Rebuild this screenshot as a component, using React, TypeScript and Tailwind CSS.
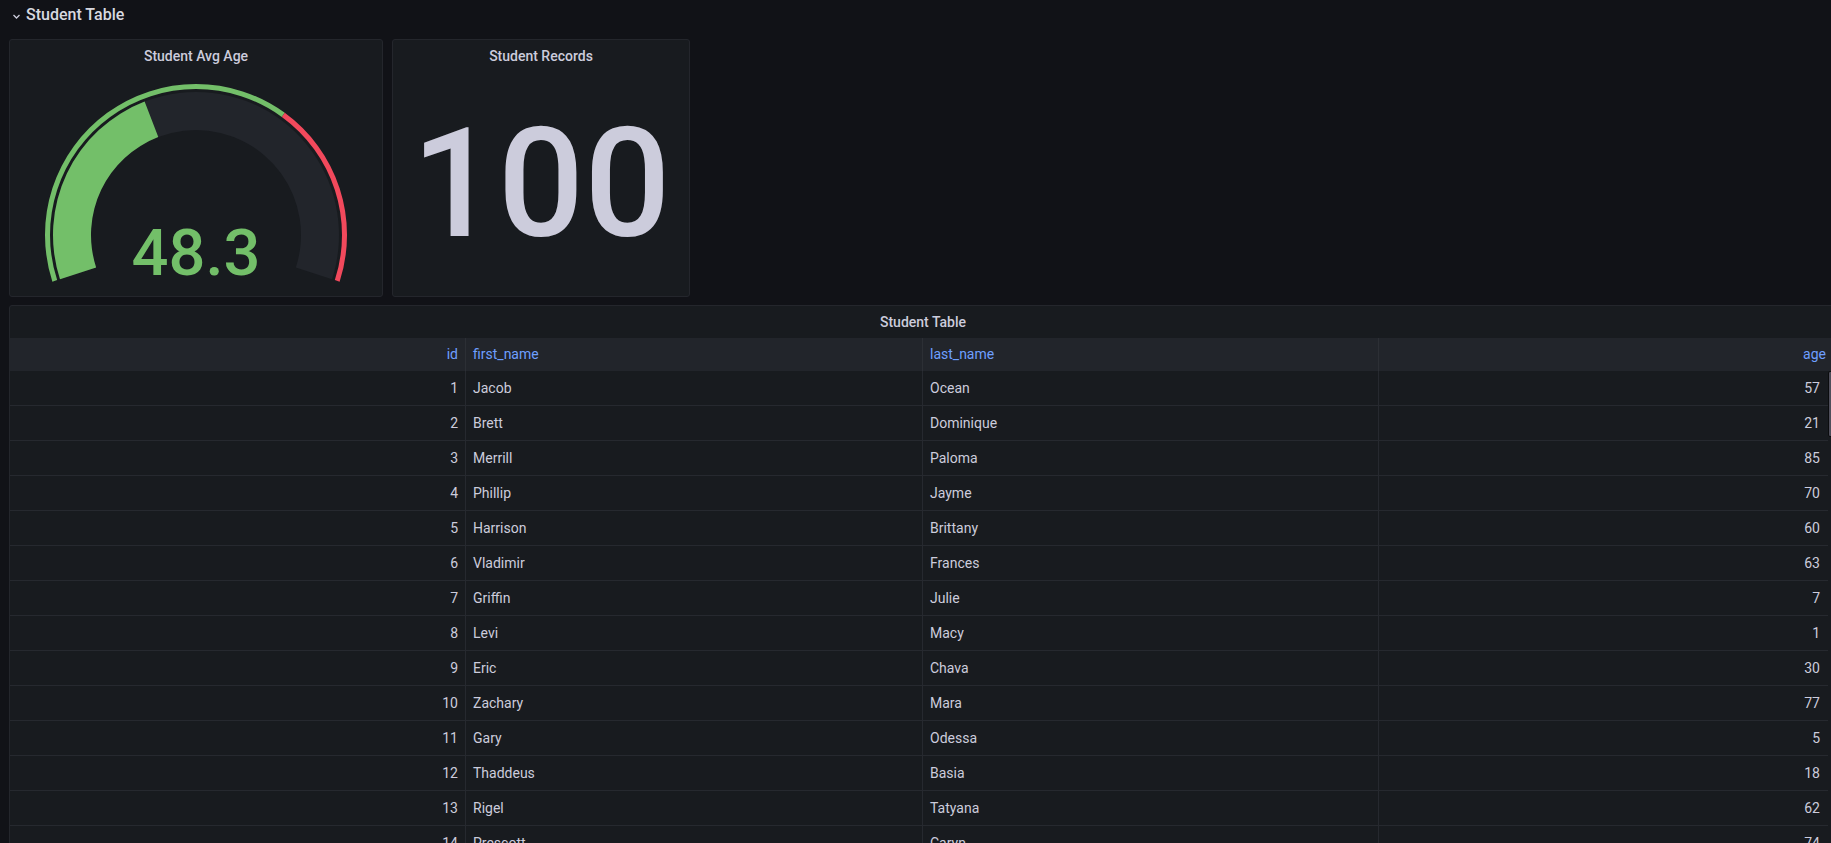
import React from "react";

const rows: [number, string, string, number][] = [
  [1, "Jacob", "Ocean", 57],
  [2, "Brett", "Dominique", 21],
  [3, "Merrill", "Paloma", 85],
  [4, "Phillip", "Jayme", 70],
  [5, "Harrison", "Brittany", 60],
  [6, "Vladimir", "Frances", 63],
  [7, "Griffin", "Julie", 7],
  [8, "Levi", "Macy", 1],
  [9, "Eric", "Chava", 30],
  [10, "Zachary", "Mara", 77],
  [11, "Gary", "Odessa", 5],
  [12, "Thaddeus", "Basia", 18],
  [13, "Rigel", "Tatyana", 62],
  [14, "Prescott", "Caryn", 74],
];

// annular sector, angles in degrees (math orientation), drawn clockwise from a0 to a1
function sector(cx: number, cy: number, r0: number, r1: number, a0: number, a1: number) {
  const rad = (a: number) => (a * Math.PI) / 180;
  const pt = (r: number, a: number) =>
    `${(cx + r * Math.cos(rad(a))).toFixed(2)} ${(cy - r * Math.sin(rad(a))).toFixed(2)}`;
  const large = a0 - a1 > 180 ? 1 : 0;
  return `M ${pt(r1, a0)} A ${r1} ${r1} 0 ${large} 1 ${pt(r1, a1)} L ${pt(r0, a1)} A ${r0} ${r0} 0 ${large} 0 ${pt(r0, a0)} Z`;
}

function Gauge() {
  const cx = 186;
  const cy = 163;
  const start = 198;
  const sweep = 216;
  const max = 120;
  const at = (v: number) => start - (v / max) * sweep;
  return (
    <svg width="372" height="224" viewBox="0 0 372 224">
      {/* thresholds */}
      <path d={sector(cx, cy, 146, 151, start, at(80))} fill="#73BF69" />
      <path d={sector(cx, cy, 146, 151, at(80), start - sweep)} fill="#F2495C" />
      {/* bar */}
      <path d={sector(cx, cy, 105, 143, start, start - sweep)} fill="#22252b" />
      <path d={sector(cx, cy, 105, 143, start, at(48.3))} fill="#73BF69" />
      <text
        x={cx}
        y={203}
        textAnchor="middle"
        fontFamily="Roboto, sans-serif"
        fontWeight={500}
        fontSize={65}
        fill="#73BF69"
      >
        48.3
      </text>
    </svg>
  );
}

function Panel({ title, className, children }: { title: string; className?: string; children: React.ReactNode }) {
  return (
    <div className={`flex flex-col rounded-[3px] border border-[#24262c] bg-[#181b1f] ${className ?? ""}`}>
      <div className="flex h-[32px] shrink-0 items-center justify-center text-[14px] font-medium text-[#ccccdc]">
        {title}
      </div>
      {children}
    </div>
  );
}

export default function App() {
  return (
    <div className="h-[843px] w-[1831px] overflow-hidden bg-[#111217] font-['Roboto',sans-serif] text-[#ccccdc]">
      {/* Row header */}
      <div className="flex h-[30px] items-center gap-[5px] pl-[12px]">
        <svg width="9" height="9" viewBox="0 0 9 9" className="mt-[2px]">
          <path d="M1.5 3 L4.5 6 L7.5 3" stroke="#ccccdc" strokeWidth="1.3" fill="none" />
        </svg>
        <span className="text-[16px] font-medium text-[#d8d9e0]">Student Table</span>
      </div>

      {/* Stat panels */}
      <div className="mt-[9px] flex gap-[9px] pl-[9px]">
        <Panel title="Student Avg Age" className="h-[258px] w-[374px]">
          <Gauge />
        </Panel>
        <Panel title="Student Records" className="h-[258px] w-[298px]">
          <div className="flex flex-1 items-center justify-center">
            <span className="text-[152px] font-medium leading-none text-[#ccccdc]">100</span>
          </div>
        </Panel>
      </div>

      {/* Table panel */}
      <div className="ml-[9px] mt-[8px] w-[1840px] rounded-[3px] border border-[#24262c] bg-[#181b1f]">
        <div className="flex h-[32px] w-[1818px] items-center justify-center pl-[8px] text-[14px] font-medium">
          Student Table
        </div>
        <div className="grid h-[33px] grid-cols-[456px_457px_456px_1fr] bg-[#22252b] text-[14px] text-[#6e9fff]">
          <div className="flex items-center justify-end border-r border-[#2c2f35] px-[7px]">id</div>
          <div className="flex items-center border-r border-[#2c2f35] px-[7px]">first_name</div>
          <div className="flex items-center border-r border-[#2c2f35] px-[7px]">last_name</div>
          <div className="flex w-[455px] items-center justify-end pr-[8px]">age</div>
        </div>
        <div className="relative">
          {rows.map(([id, first, last, age]) => (
            <div
              key={id}
              className="grid h-[35px] w-[1818px] grid-cols-[456px_457px_456px_449px] border-b border-[#26292f] text-[14px] text-[#ccccdc]"
            >
              <div className="flex items-center justify-end border-r border-[#26292f] px-[7px]">{id}</div>
              <div className="flex items-center border-r border-[#26292f] px-[7px]">{first}</div>
              <div className="flex items-center border-r border-[#26292f] px-[7px]">{last}</div>
              <div className="flex items-center justify-end pr-[8px]">{age}</div>
            </div>
          ))}
          <div className="absolute left-[1818px] top-0 h-[66px] w-[8px] rounded-[2px] border border-[#0b0c0e] bg-[#4e4e5a]" />
        </div>
      </div>
    </div>
  );
}
